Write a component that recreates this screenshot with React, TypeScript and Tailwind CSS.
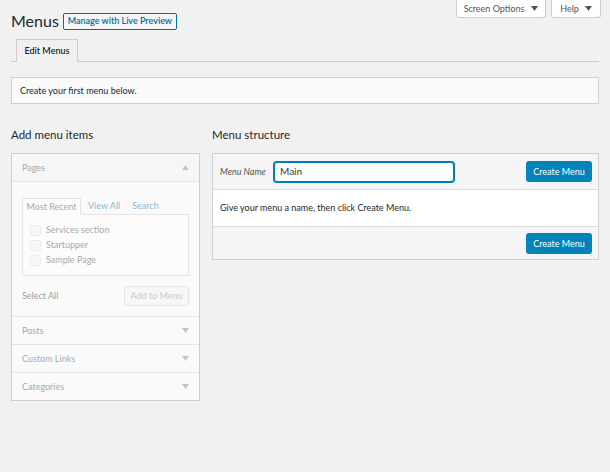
import React from "react";

const Caret = ({ up = false }: { up?: boolean }) => (
  <svg width="7" height="5" viewBox="0 0 7 5" className={up ? "" : "rotate-180"}>
    <path d="M0 5 L3.5 0 L7 5 Z" fill="currentColor" />
  </svg>
);

const recent = ["Services section", "Startupper", "Sample Page"];
const sections = ["Posts", "Custom Links", "Categories"];

const CreateButton = () => (
  <button className="h-[21px] w-[66px] rounded-[3px] bg-[#0085ba] text-[9px] text-white leading-none">
    Create Menu
  </button>
);

export default function App() {
  return (
    <div className="relative min-h-[472px] bg-[#f1f1f1] px-[11px] pt-[8px] text-[#23282d] font-['Lato',sans-serif]">
      {/* screen meta links */}
      <div className="absolute right-[9px] top-0 flex gap-[5px]">
        <button className="flex h-[18px] w-[90px] items-center justify-center gap-[7px] rounded-b-[3px] border border-t-0 border-[#ccd0d4] bg-white text-[9px] text-[#555]">
          Screen Options
          <Caret />
        </button>
        <button className="flex h-[18px] w-[50px] items-center justify-center gap-[6px] rounded-b-[3px] border border-t-0 border-[#ccd0d4] bg-white text-[9px] text-[#555]">
          Help
          <Caret />
        </button>
      </div>

      <div className="flex h-[26px] items-center gap-[4px]">
        <h1 className="text-[16px] leading-none text-[#23282d]">Menus</h1>
        <a className="flex h-[17px] w-[114px] items-center justify-center rounded-[2px] border border-[#0071a1] bg-[#f3f5f6] text-[9px] font-semibold text-[#0071a1]">
          Manage with Live Preview
        </a>
      </div>

      <div className="mt-[5px] flex border-b border-[#ccc] pl-[5px]">
        <div className="-mb-px flex h-[23px] w-[62px] items-center justify-center border border-[#ccc] border-b-[#f1f1f1] bg-[#f1f1f1] text-[9px] font-semibold text-[#23282d]">
          Edit Menus
        </div>
      </div>

      <div className="mt-[15px] flex h-[27px] items-center border border-[#ccd0d4] bg-[#fafafa] px-[8px] text-[9px] text-[#23282d]">
        Create your first menu below.
      </div>

      <div className="mt-[23px] flex gap-[12px]">
        {/* left column */}
        <div className="w-[189px] shrink-0">
          <h2 className="h-[16px] text-[11.5px] leading-[16px]">Add menu items</h2>
          <div className="mt-[10px] border border-[#ccd0d4] bg-[#fafafa] text-[9px] text-[#a7aaad]">
            <div className="flex h-[28px] items-center justify-between border-b border-[#e5e5e5] bg-[#f6f6f6] px-[10px]">
              <span>Pages</span>
              <span className="text-[#c3c4c7]">
                <Caret up />
              </span>
            </div>
            <div className="px-[10px] pt-[16px]">
              <div className="flex h-[16px] items-end">
                <div className="-mb-px flex h-[17px] w-[59px] items-center justify-center border border-[#e5e5e5] border-b-[#fcfcfc] bg-[#fcfcfc] text-[#a7aaad]">
                  Most Recent
                </div>
                <span className="ml-[7px] flex h-[16px] items-center text-[#8bb9d6]">View All</span>
                <span className="ml-[12px] flex h-[16px] items-center text-[#8bb9d6]">Search</span>
              </div>
              <div className="flex h-[62px] flex-col justify-center gap-[3px] border border-[#e5e5e5] bg-[#fcfcfc] pl-[7px]">
                {recent.map((item) => (
                  <label key={item} className="flex h-[12px] items-center gap-[5px]">
                    <span className="h-[11px] w-[11px] rounded-[2px] border border-[#ececec] bg-[#f7f7f7]" />
                    {item}
                  </label>
                ))}
              </div>
              <div className="flex h-[40px] items-center justify-between">
                <span className="text-[#9a9da0]">Select All</span>
                <button className="h-[20px] w-[65px] rounded-[3px] border border-[#e5e5e5] bg-[#f7f7f7] text-[#c8cacc]">
                  Add to Menu
                </button>
              </div>
            </div>
            {sections.map((s) => (
              <div
                key={s}
                className="flex h-[28px] items-center justify-between border-t border-[#e5e5e5] px-[10px]"
              >
                <span>{s}</span>
                <span className="text-[#c3c4c7]">
                  <Caret />
                </span>
              </div>
            ))}
          </div>
        </div>

        {/* right column */}
        <div className="flex-1">
          <h2 className="h-[16px] text-[11.5px] leading-[16px]">Menu structure</h2>
          <div className="mt-[10px] border border-[#ccd0d4] text-[9px]">
            <div className="flex h-[36px] items-center border-b border-[#dcdcde] bg-[#f5f5f5] pl-[7px] pr-[6px]">
              <span className="w-[54px] italic text-[#555]">Menu Name</span>
              <div className="flex h-[20px] w-[180px] items-center rounded-[3px] border border-[#007cba] bg-white px-[5px] text-[10px] text-[#32373c] shadow-[0_0_0_1px_#007cba]">
                Main
              </div>
              <div className="ml-auto">
                <CreateButton />
              </div>
            </div>
            <div className="flex h-[36px] items-center bg-white px-[7px] text-[#23282d]">
              Give your menu a name, then click Create Menu.
            </div>
            <div className="flex h-[33px] items-center justify-end border-t border-[#dcdcde] bg-[#f5f5f5] px-[6px]">
              <CreateButton />
            </div>
          </div>
        </div>
      </div>
    </div>
  );
}
